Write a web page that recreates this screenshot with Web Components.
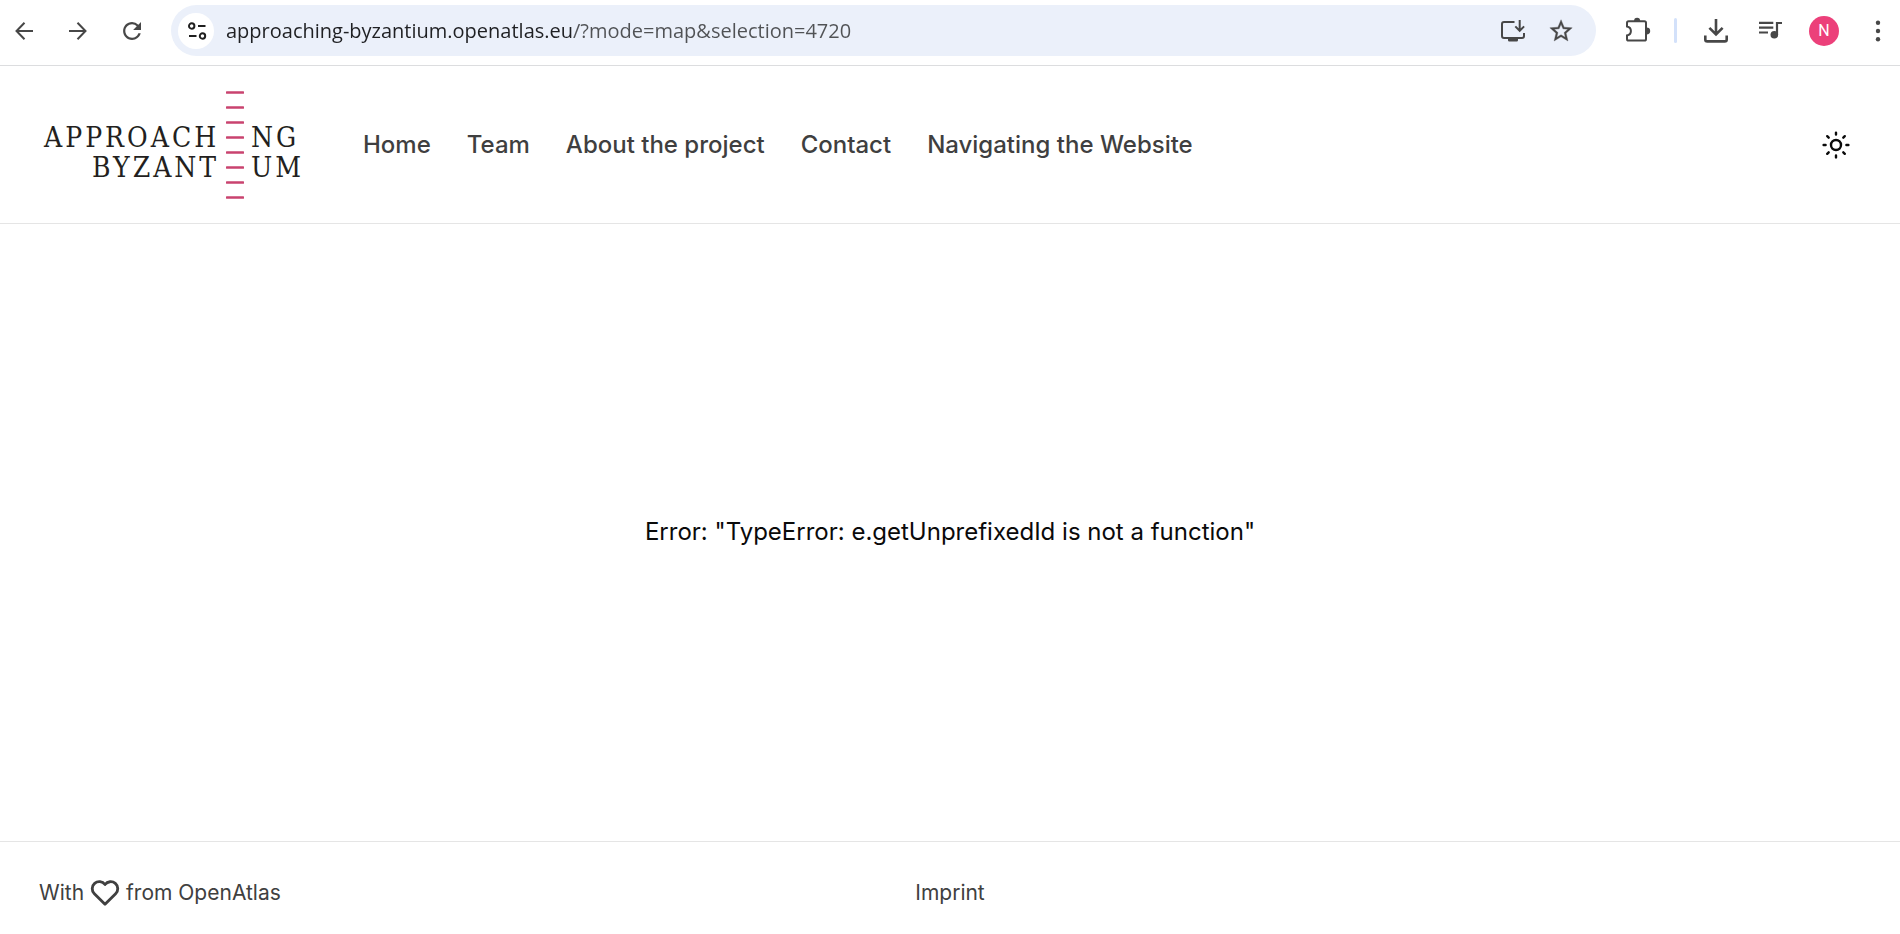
<!DOCTYPE html>
<html lang="en">
<head>
<meta charset="utf-8">
<title>Approaching Byzantium</title>
<style>
  html, body { height: 100%; margin: 0; }
  body { background: #fff; color: #0a0a0a; font-family: Inter, "Liberation Sans", sans-serif; }
</style>
</head>
<body>
<app-shell>
  <browser-bar slot="top" host="approaching-byzantium.openatlas.eu" path="/?mode=map&amp;selection=4720"></browser-bar>
  <site-header slot="top">
    <site-logo slot="logo"></site-logo>
    <nav-item href="#home">Home</nav-item>
    <nav-item href="#team">Team</nav-item>
    <nav-item href="#about">About the project</nav-item>
    <nav-item href="#contact">Contact</nav-item>
    <nav-item href="#navigating">Navigating the Website</nav-item>
  </site-header>
  <error-message>Error: "TypeError: e.getUnprefixedId is not a function"</error-message>
  <site-footer slot="bottom"></site-footer>
</app-shell>

<script>
const define = (name, html, setup) => {
  const template = document.createElement('template');
  template.innerHTML = html;
  customElements.define(name, class extends HTMLElement {
    constructor() {
      super();
      this.attachShadow({ mode: 'open' }).append(template.content.cloneNode(true));
    }
    connectedCallback() { if (setup) setup(this, this.shadowRoot); }
  });
};

const stroke = (d, w = 2) => `<path d="${d}" fill="none" stroke="currentColor" stroke-width="${w}"/>`;
const ICONS = {
  back: stroke('M27 18H11M18.5 9.7 10.5 18l8 8.3', 2),
  forward: stroke('M9 18h16M17.5 9.7l8 8.3-8 8.3', 2),
  reload: '<path transform="translate(4.6 4.6) scale(1.12)" fill="currentColor" d="M17.65 6.35A7.958 7.958 0 0 0 12 4c-4.42 0-7.99 3.58-7.99 8s3.57 8 7.99 8c3.73 0 6.84-2.55 7.73-6h-2.08A5.99 5.99 0 0 1 12 18c-3.31 0-6-2.69-6-6s2.69-6 6-6c1.66 0 3.14.69 4.22 1.78L13 11h7V4z"/>',
  tune: stroke('M20 13h7.5M11 23h7.5M16.4 13a2.7 2.7 0 1 1-5.4 0a2.7 2.7 0 1 1 5.4 0zM27.2 23a2.7 2.7 0 1 1-5.4 0a2.7 2.7 0 1 1 5.4 0z', 2),
  install: stroke('M19.5 9H9q-2 0-2 2v12q0 2 2 2h18q2 0 2-2v-3M24.7 7v10.5M20.3 13.4l4.4 4.4 4.4-4.4') + '<path fill="currentColor" d="M13 25h10v2.2q0 1.3-1.3 1.3h-7.4q-1.3 0-1.3-1.3z"/>',
  star: '<path transform="translate(4.6 4.5) scale(1.12)" fill="currentColor" stroke="currentColor" stroke-width=".3" d="M22 9.24l-7.19-.62L12 2 9.19 8.63 2 9.24l5.46 4.73L5.82 21 12 17.27 18.18 21l-1.63-7.03L22 9.24zM12 15.4l-3.76 2.27 1-4.28-3.32-2.88 4.38-.38L12 6.1l1.71 4.04 4.38.38-3.32 2.88 1 4.28L12 15.4z"/>',
  puzzle: stroke('M8.6 8.2H24.4q1.6 0 1.6 1.6V26q0 1.6-1.6 1.6H8.6Q7 27.6 7 26v-3.6c5.2-1 5.2-8 0-9V9.8q0-1.6 1.6-1.6z') + '<path fill="currentColor" d="M14 8.2a3.1 3.4 0 0 1 6.2 0zM26.5 14.6a3.7 3.4 0 0 1 0 6.8z"/>',
  download: stroke('M18 6v15M11.4 14.8l6.6 6.6 6.6-6.6M7.3 22.4v4q0 2 2 2h17.4q2 0 2-2v-4', 2.6),
  playlist: stroke('M7 9.8h14.3M7 14.6h14.3M7 19.5h9M25 22V10h5', 2.2) + '<circle cx="22.3" cy="21.7" r="3.8" fill="currentColor"/>',
  menu: '<g fill="currentColor"><circle cx="18" cy="9.7" r="2.2"/><circle cx="18" cy="18" r="2.2"/><circle cx="18" cy="26.2" r="2.2"/></g>',
  sun: '<circle cx="18" cy="18" r="5" fill="none" stroke="currentColor" stroke-width="2.4"/>' +
       '<path fill="none" stroke="currentColor" stroke-width="2.4" stroke-linecap="round" d="M18 5.6v2M18 28.4v2M5.6 18h2M28.4 18h2M9.2 9.2l1.5 1.5M25.3 25.3l1.5 1.5M9.2 26.8l1.5-1.5M25.3 10.7l1.5-1.5"/>'
};

/* A 36px icon on a transparent button */
customElements.define('icon-button', class extends HTMLElement {
  constructor() {
    super();
    this.attachShadow({ mode: 'open' }).innerHTML = `
      <style>
        :host { display: block; flex: none; }
        button { display: block; width: 36px; height: 36px; padding: 0; border: 0; border-radius: 50%;
                 background: var(--icon-bg, transparent); color: inherit; cursor: pointer; }
        svg { display: block; }
      </style>
      <button type="button" aria-label="${this.getAttribute('label')}">
        <svg width="36" height="36" viewBox="0 0 36 36" aria-hidden="true">${ICONS[this.getAttribute('icon')]}</svg>
      </button>`;
  }
});

define('app-shell', `
  <style>
    :host { display: flex; flex-direction: column; min-height: 100%; }
    main { flex: 1; display: grid; place-items: center; }
  </style>
  <slot name="top"></slot>
  <main><slot></slot></main>
  <slot name="bottom"></slot>`);

define('browser-bar', `
  <style>
    :host { display: flex; align-items: center; gap: 18px; padding: 5px 4px 9px 6px;
            border-bottom: 1px solid #dcdddf; color: #474747; }
    form { flex: 1; display: flex; align-items: center; gap: 12px; height: 51px; box-sizing: border-box;
           min-width: 0; margin: 0 6px 0 3px; padding: 0 17px 0 7px; border-radius: 26px; background: #ebf0fa; }
    .site { --icon-bg: #fff; color: #1f1f1f; }
    input { flex: 1; min-width: 0; height: 36px; padding: 0; border: 0; outline: 0;
            font: 20px/36px "Open Sans", "Noto Sans", sans-serif;
            background: linear-gradient(90deg, #1f2023 var(--host-end), #505255 var(--host-end));
            -webkit-background-clip: text; background-clip: text; color: transparent; }
    .rule { width: 3px; height: 25px; margin-right: 3px; border-radius: 2px; background: #d3e1fa; }
    .avatar { width: 30px; height: 30px; margin: 0 3px; padding: 0; border: 0; border-radius: 50%;
              background: #ec407a; color: #fff; font: 16px/30px Roboto, sans-serif; }
  </style>
  <icon-button icon="back" label="Back"></icon-button>
  <icon-button icon="forward" label="Forward"></icon-button>
  <icon-button icon="reload" label="Reload"></icon-button>
  <form>
    <icon-button class="site" icon="tune" label="View site information"></icon-button>
    <input type="text" aria-label="Address" spellcheck="false">
    <icon-button icon="install" label="Install app"></icon-button>
    <icon-button icon="star" label="Bookmark"></icon-button>
  </form>
  <icon-button icon="puzzle" label="Extensions"></icon-button>
  <span class="rule"></span>
  <icon-button icon="download" label="Downloads"></icon-button>
  <icon-button icon="playlist" label="Media"></icon-button>
  <button class="avatar" type="button" aria-label="Profile N">N</button>
  <icon-button icon="menu" label="Menu"></icon-button>`,
  (el, root) => {
    const input = root.querySelector('input');
    const host = el.getAttribute('host');
    input.value = host + el.getAttribute('path');
    const ctx = document.createElement('canvas').getContext('2d');
    ctx.font = '20px "Open Sans", "Noto Sans", sans-serif';
    input.style.setProperty('--host-end', Math.round(ctx.measureText(host).width) + 'px');
  });

define('site-logo', `
  <style>
    :host { display: block; }
    a { display: grid; grid-template-columns: 175px 18px 46px; column-gap: 7px; align-items: center;
        color: #231f20; text-decoration: none; white-space: nowrap;
        font: 28px/30px "DejaVu Serif Condensed", "Liberation Serif", serif; letter-spacing: 3px; }
    .start, .end { display: grid; padding-top: 16px; }
    .start { justify-items: end; }
    svg { display: block; }
  </style>
  <a href="#home" aria-label="Approaching Byzantium">
    <span class="start"><span>APPROACH</span><span>BYZANT</span></span>
    <svg width="18" height="110" viewBox="0 0 18 110" aria-hidden="true">
      <path d="M1 2.5h16M1 17.5h16M1 32.5h16M1 47.5h16M1 62.5h16M1 77.5h16M1 92.5h16M1 107.5h16"
            stroke="#c9436f" stroke-width="2.6" stroke-linecap="round"/>
    </svg>
    <span class="end"><span>NG</span><span>UM</span></span>
  </a>`);

define('nav-item', `
  <style>
    :host { display: block; }
    a { color: #3f3f40; font-size: 24px; line-height: 32px; font-weight: 500; text-decoration: none; white-space: nowrap; }
  </style>
  <a><slot></slot></a>`,
  (el, root) => { root.querySelector('a').href = el.getAttribute('href'); });

define('site-header', `
  <style>
    :host { display: flex; align-items: center; box-sizing: border-box; min-height: 158px; padding: 0 46px 0 44px;
            border-bottom: 1px solid #e5e5e5; }
    nav { flex: 1; display: flex; gap: 36px; margin-left: 66px; }
  </style>
  <slot name="logo"></slot>
  <nav aria-label="Main"><slot></slot></nav>
  <icon-button icon="sun" label="Toggle colour scheme"></icon-button>`);

define('error-message', `
  <style>
    :host { display: block; padding: 24px 24px 26px; font-size: 24px; line-height: 32px; color: #0a0a0a; }
    p { margin: 0; }
  </style>
  <p role="alert"><slot></slot></p>`);

define('site-footer', `
  <style>
    :host { display: grid; grid-template-columns: 1fr auto 1fr; align-items: center; padding: 10px 39px 0;
            box-sizing: border-box; min-height: 93px;
            border-top: 1px solid #e5e5e5; color: #404040; font-size: 21px; line-height: 28px; }
    .credit { display: flex; align-items: center; gap: 4px; }
    a { color: inherit; text-decoration: none; }
    svg { display: block; }
  </style>
  <span class="credit">
    <span>With</span>
    <svg width="34" height="34" viewBox="0 0 24 24" fill="none" stroke="currentColor" stroke-width="2" stroke-linecap="round" stroke-linejoin="round" role="img" aria-label="love">
      <path d="M19.5 12.572 12 20l-7.5-7.428a5 5 0 1 1 7.5-6.566 5 5 0 1 1 7.5 6.572"/>
    </svg>
    <span>from <a href="#openatlas">OpenAtlas</a></span>
  </span>
  <a href="#imprint">Imprint</a>`);
</script>
</body>
</html>
